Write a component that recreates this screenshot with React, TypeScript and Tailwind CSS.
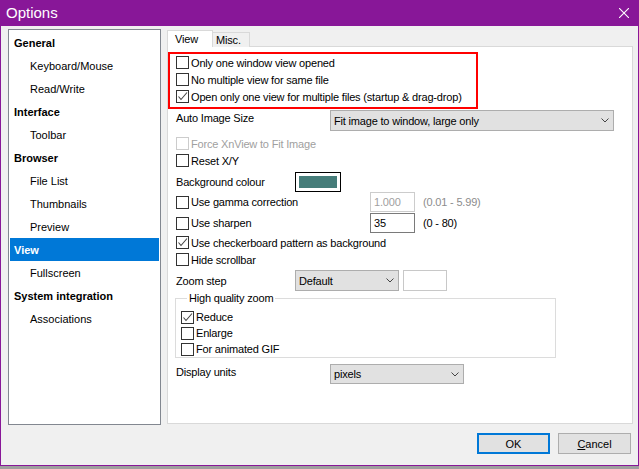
const Check = ({ checked = false, disabled = false }: { checked?: boolean; disabled?: boolean }) => (
  <span
    className={`w-[13px] h-[13px] shrink-0 bg-white border flex items-center justify-center ${
      disabled ? "border-[#cccccc]" : "border-[#333333]"
    }`}
  >
    {checked && (
      <svg width="11" height="11" viewBox="0 0 11 11">
        <polyline points="1.5,5.5 4,8.5 10,1.5" fill="none" stroke="#444" strokeWidth="1.1" />
      </svg>
    )}
  </span>
);

const CheckRow = ({
  label,
  checked,
  disabled,
  className = "",
}: {
  label: string;
  checked?: boolean;
  disabled?: boolean;
  className?: string;
}) => (
  <div className={`flex items-center gap-[2px] ${className}`}>
    <Check checked={checked} disabled={disabled} />
    <span className={disabled ? "text-[#a0a0a0]" : "text-black"}>{label}</span>
  </div>
);

const Chevron = () => (
  <svg width="8" height="5" viewBox="0 0 8 5">
    <path d="M0.5 0.5 L4 4 L7.5 0.5" fill="none" stroke="#444" strokeWidth="1" />
  </svg>
);

const Combo = ({ value, className = "" }: { value: string; className?: string }) => (
  <div
    className={`flex items-center justify-between bg-[#e1e1e1] border border-[#adadad] pl-[3px] pr-[4px] ${className}`}
  >
    <span>{value}</span>
    <Chevron />
  </div>
);

const tree = [
  { label: "General", top: true },
  { label: "Keyboard/Mouse" },
  { label: "Read/Write" },
  { label: "Interface", top: true },
  { label: "Toolbar" },
  { label: "Browser", top: true },
  { label: "File List" },
  { label: "Thumbnails" },
  { label: "Preview" },
  { label: "View", top: true, selected: true },
  { label: "Fullscreen" },
  { label: "System integration", top: true },
  { label: "Associations" },
];

export default function App() {
  return (
    <div className="w-[639px] h-[469px] bg-[#9e9e9e] font-['Liberation_Sans',Arial,sans-serif] text-[11px] leading-[14px] text-black">
      <div className="w-[639px] h-[466px] flex flex-col border-x border-b border-[#881798] bg-[#f0f0f0]">
        {/* title bar */}
        <div className="h-[26px] shrink-0 bg-[#881798] flex items-center justify-between pl-[5px] pr-[9px] text-white">
          <span className="text-[15px] leading-[18px]">Options</span>
          <svg width="10" height="10" viewBox="0 0 10 10">
            <path d="M0 0 L10 10 M10 0 L0 10" stroke="#fff" strokeWidth="1.1" />
          </svg>
        </div>

        <div className="flex pt-[3px] pl-[7px]">
          {/* tree */}
          <div className="w-[153px] h-[396px] bg-white border border-[#828790] pt-px px-px">
            {tree.map((t) => (
              <div
                key={t.label}
                className={`h-[23px] flex items-center ${t.top ? "pl-[4px] font-bold" : "pl-[20px]"} ${
                  t.selected ? "bg-[#0078d7] text-white" : ""
                }`}
              >
                {t.label}
              </div>
            ))}
          </div>

          {/* tabs */}
          <div className="ml-[6px] pt-px w-[466px] flex flex-col tracking-[-0.18px]">
            <div className="flex items-end h-[17px] relative z-10 -mb-px">
              <div className="h-[17px] w-[46px] bg-white border border-b-0 border-[#d9d9d9] pl-[7px] pt-[1px]">View</div>
              <div className="h-[15px] w-[37px] bg-[#f0f0f0] border border-l-0 border-b-0 border-[#d9d9d9] pl-[3px]">
                Misc.
              </div>
            </div>
            <div className="h-[378px] bg-white border border-[#d9d9d9] flex flex-col">
              <div className="mt-[5px] w-[310px] h-[57px] border-2 border-[#ff0000] pl-[6px] flex flex-col">
                <CheckRow className="h-[17px]" label="Only one window view opened" />
                <CheckRow className="h-[17px]" label="No multiple view for same file" />
                <CheckRow className="h-[17px]" label="Open only one view for multiple files (startup & drag-drop)" checked />
              </div>

              <div className="mt-px h-[21px] pl-[8px] flex items-start">
                <span className="w-[154px] pt-[1px]">Auto Image Size</span>
                <Combo className="w-[284px] h-[21px]" value="Fit image to window, large only" />
              </div>

              <CheckRow className="mt-[4px] h-[17px] pl-[8px]" label="Force XnView to Fit Image" disabled />
              <CheckRow className="h-[17px] pl-[8px]" label="Reset X/Y" />

              <div className="mt-[3px] h-[20px] pl-[8px] flex items-center">
                <span className="w-[119px]">Background colour</span>
                <div className="w-[46px] h-[20px] border border-black bg-white p-[3px] flex">
                  <div className="flex-1 bg-[#467d7a]" />
                </div>
              </div>

              <div className="h-[20px] pl-[8px] flex items-center">
                <CheckRow className="w-[194px]" label="Use gamma correction" />
                <div className="w-[45px] h-[20px] border border-[#cccccc] pl-[3px] flex items-center text-[#a0a0a0]">1.000</div>
                <span className="ml-[8px] text-[#8c8c8c]">(0.01 - 5.99)</span>
              </div>

              <div className="mt-px h-[20px] pl-[8px] flex items-center">
                <CheckRow className="w-[194px]" label="Use sharpen" />
                <div className="w-[45px] h-[20px] border border-[#7a7a7a] pl-[3px] flex items-center">35</div>
                <span className="ml-[8px]">(0 - 80)</span>
              </div>

              <CheckRow className="mt-px h-[17px] pl-[8px]" label="Use checkerboard pattern as background" checked />
              <CheckRow className="h-[17px] pl-[8px]" label="Hide scrollbar" />

              <div className="mt-[2px] h-[21px] pl-[8px] flex items-center">
                <span className="w-[119px]">Zoom step</span>
                <Combo className="w-[104px] h-[21px]" value="Default" />
                <div className="ml-[4px] w-[44px] h-[21px] border border-[#c8c8c8] bg-white" />
              </div>

              <fieldset className="ml-[7px] w-[381px] border border-[#dcdcdc] pl-[5px] pb-0">
                <legend className="ml-[6px] px-[2px] leading-[14px]">High quality zoom</legend>
                <div className="mt-[4px] flex flex-col">
                  <CheckRow className="h-[16px]" label="Reduce" checked />
                  <CheckRow className="h-[16px]" label="Enlarge" />
                  <CheckRow className="h-[16px]" label="For animated GIF" />
                </div>
              </fieldset>

              <div className="mt-[6px] h-[20px] pl-[8px] flex items-start">
                <span className="w-[154px] pt-[1px]">Display units</span>
                <Combo className="w-[134px] h-[20px]" value="pixels" />
              </div>
            </div>
          </div>
        </div>

        {/* buttons */}
        <div className="mt-[8px] flex justify-end gap-[8px] pr-[7px]">
          <button className="w-[73px] h-[21px] bg-[#e1e1e1] border-2 border-[#0078d7] flex items-center justify-center">
            OK
          </button>
          <button className="w-[73px] h-[21px] bg-[#e1e1e1] border border-[#adadad] flex items-center justify-center">
            <span>
              <span className="underline">C</span>ancel
            </span>
          </button>
        </div>
      </div>
    </div>
  );
}
